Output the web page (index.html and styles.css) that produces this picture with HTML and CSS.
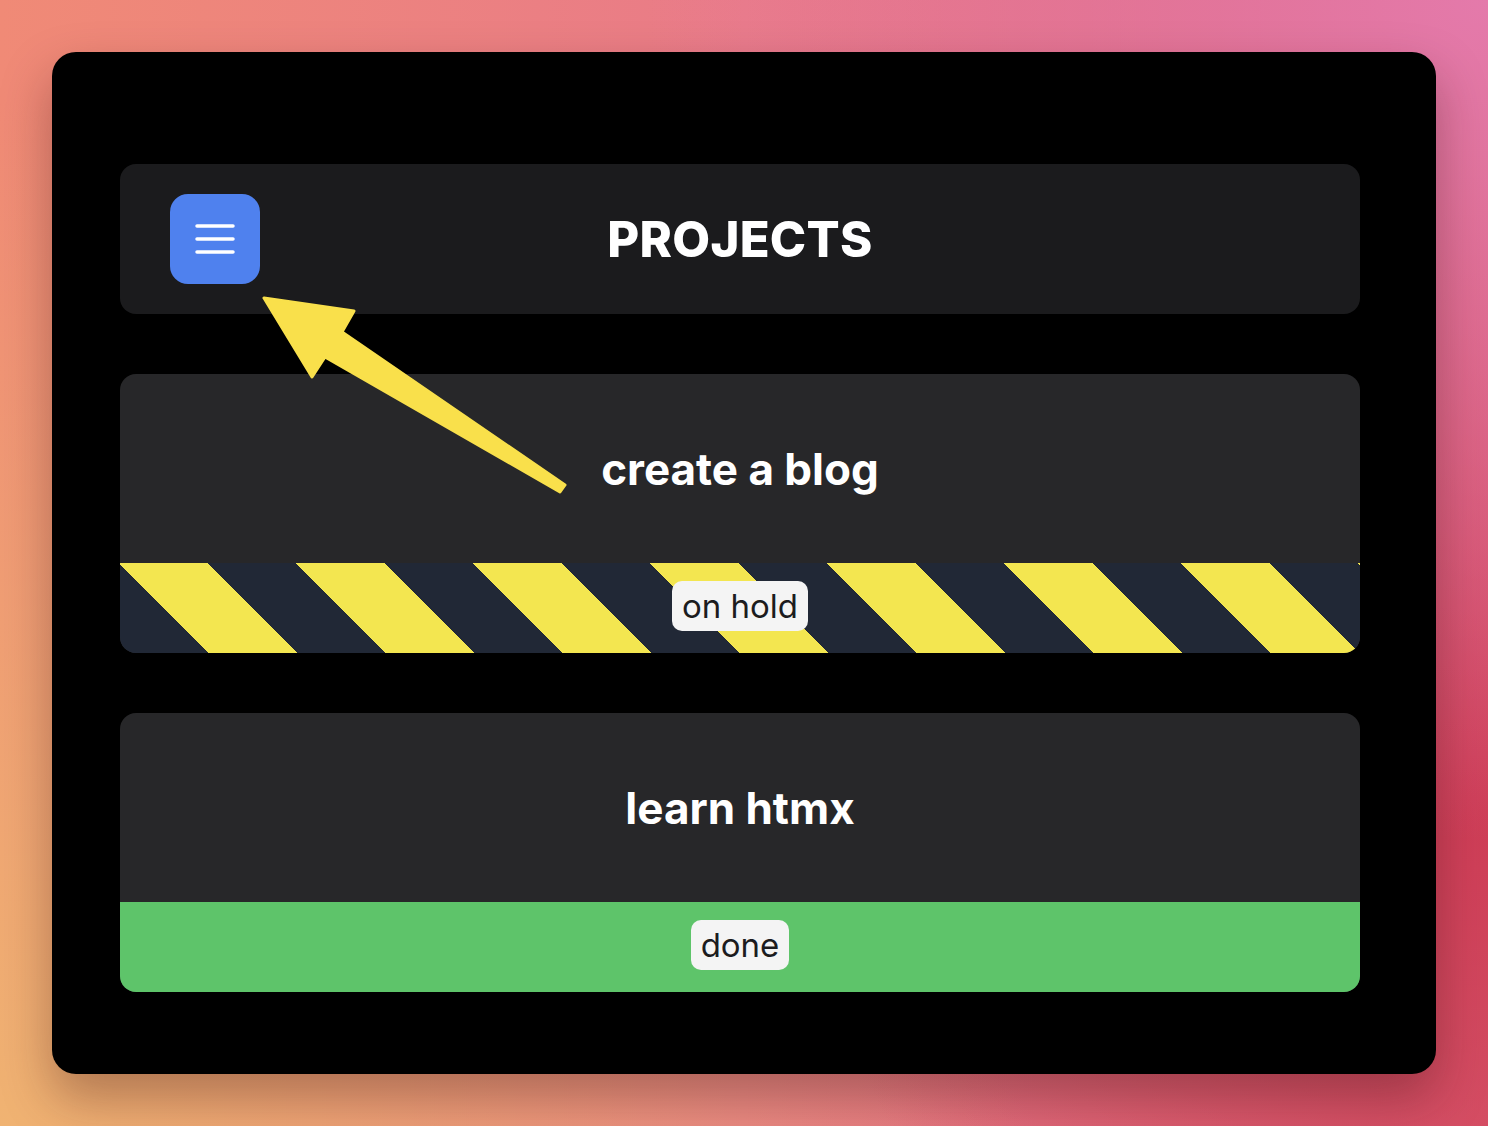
FILE: index.html
```html
<!DOCTYPE html>
<html lang="en">
<head>
    <meta charset="UTF-8">
    <meta name="viewport" content="width=device-width, initial-scale=1.0">
    <title>Projects</title>
    <link rel="stylesheet" href="styles.css">
</head>
<body>
    <div class="stage">
        <main class="window">
            <!-- Header with menu button -->
            <header class="header">
                <button class="menu-btn" aria-label="Menu">
                    <svg width="40" height="32" viewBox="0 0 40 32">
                        <path d="M2 3H38M2 16H38M2 29H38" stroke="#fff" stroke-width="3.5" stroke-linecap="round"/>
                    </svg>
                </button>
                <h1>PROJECTS</h1>
            </header>

            <!-- Project cards -->
            <section class="project">
                <h2>create a blog</h2>
                <div class="status status-hold">
                    <span class="badge">on hold</span>
                </div>
            </section>

            <section class="project">
                <h2>learn htmx</h2>
                <div class="status status-done">
                    <span class="badge">done</span>
                </div>
            </section>
        </main>

        <!-- Annotation arrow pointing at the menu button -->
        <svg class="arrow" viewBox="0 0 1488 1126" width="1488" height="1126">
            <polygon points="264,298 354,311 342,332 565,485 560,492 325,357 312,377"
                     fill="#f9e04b" stroke="#f9e04b" stroke-width="3" stroke-linejoin="round"/>
        </svg>
    </div>
</body>
</html>
```

FILE: styles.css
```css
* {
    box-sizing: border-box;
}
body {
    margin: 0;
    font-family: "Inter", "Noto Sans", sans-serif;
    background:
        radial-gradient(circle at 100% 0%, #e47aab 0, rgba(228, 122, 171, 0) 45%),
        radial-gradient(circle at 100% 72%, #cf3d57 0, rgba(207, 61, 87, 0) 40%),
        radial-gradient(circle at 0% 100%, #f0b372 0, rgba(240, 179, 114, 0) 55%),
        linear-gradient(90deg, #f08a76, #e97b88 50%, #da5f70);
}
.stage {
    position: relative;
    width: 1488px;
    height: 1126px;
    padding: 52px;
    overflow: hidden;
}
.window {
    height: 1022px;
    background: #000;
    border-radius: 24px;
    padding: 112px 76px 0 68px;
    display: flex;
    flex-direction: column;
    gap: 60px;
    box-shadow: 0 24px 50px rgba(60, 20, 20, 0.35);
}
.header {
    position: relative;
    height: 150px;
    background: #1b1b1d;
    border-radius: 16px;
    display: flex;
    align-items: center;
    justify-content: center;
}
.menu-btn {
    position: absolute;
    left: 50px;
    top: 30px;
    width: 90px;
    height: 90px;
    border: none;
    border-radius: 18px;
    background: #4f81ee;
    display: flex;
    align-items: center;
    justify-content: center;
    padding: 0;
    cursor: pointer;
}
h1 {
    margin: 0;
    color: #fff;
    font-size: 49px;
    font-weight: 800;
    letter-spacing: 0.3px;
}
.project {
    height: 279px;
    background: #272729;
    border-radius: 16px;
    overflow: hidden;
    display: flex;
    flex-direction: column;
}
h2 {
    flex: 1;
    margin: 0;
    display: flex;
    align-items: center;
    justify-content: center;
    color: #fff;
    font-size: 44px;
    font-weight: 700;
}
.status {
    height: 90px;
    display: flex;
    align-items: center;
    justify-content: center;
}
.status-hold {
    background: repeating-linear-gradient(45deg, #212836 0 62.6px, #f3e650 62.6px 125.2px);
}
.status-done {
    background: #5ec46a;
}
.badge {
    background: #f4f4f4;
    color: #1c1c1e;
    font-size: 33px;
    line-height: 50px;
    height: 50px;
    padding: 0 10px;
    border-radius: 10px;
    margin-bottom: 4px;
}
.arrow {
    position: absolute;
    top: 0;
    left: 0;
    pointer-events: none;
}
```
